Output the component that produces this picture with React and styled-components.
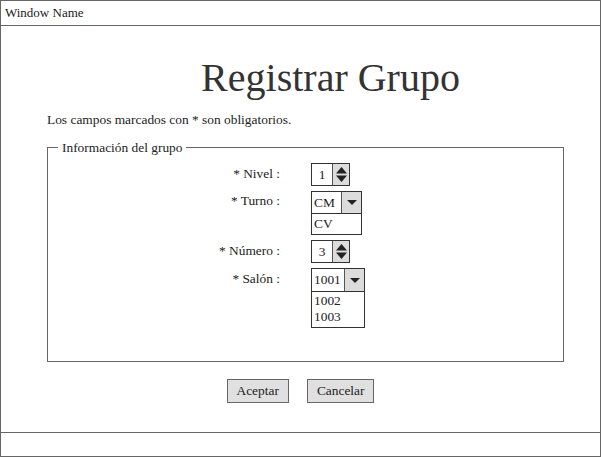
import React from 'react';
import styled, { createGlobalStyle } from 'styled-components';

const GlobalStyle = createGlobalStyle`
  html, body {
    margin: 0;
    padding: 0;
    background: #ffffff;
  }
  body {
    font-family: "Liberation Serif", "Times New Roman", serif;
    color: #333333;
  }
`;

const Window = styled.div`
  width: 601px;
  height: 457px;
  box-sizing: border-box;
  border: 1px solid #666666;
  display: flex;
  flex-direction: column;
  background: #ffffff;
`;

const TitleBar = styled.div`
  height: 24px;
  border-bottom: 1px solid #666666;
  padding-left: 4px;
  font-size: 13px;
  line-height: 24px;
  color: #222222;
`;

const Content = styled.div`
  flex: 1;
  padding-top: 30px;
  display: flex;
  flex-direction: column;
`;

const Heading = styled.h1`
  margin: 0;
  padding-left: 60px;
  font-weight: normal;
  font-size: 40px;
  line-height: 44px;
  text-align: center;
  color: #333333;
`;

const Note = styled.p`
  margin: 12px 0 0 46px;
  font-size: 13.4px;
  line-height: 15px;
  color: #222222;
`;

const FieldSet = styled.fieldset`
  margin: 13px 0 0 46px;
  width: 517px;
  box-sizing: border-box;
  border: 1px solid #666666;
  padding: 8px 0 33px 0;
`;

const Legend = styled.legend`
  margin-left: 10px;
  padding: 0 4px;
  font-size: 13.4px;
  line-height: 15px;
  color: #222222;
`;

const FormGrid = styled.div`
  display: grid;
  grid-template-columns: 232px auto;
  column-gap: 31px;
  row-gap: 5px;
  justify-content: start;
  align-items: start;
`;

const Label = styled.label`
  text-align: right;
  font-size: 13.4px;
  line-height: 15px;
  padding-top: ${p => p.$offset || 3}px;
  color: #222222;
`;

const Spinner = styled.div`
  display: flex;
  width: 39px;
  height: 23px;
  box-sizing: border-box;
  border: 1px solid #333333;
`;

const SpinValue = styled.div`
  width: 20px;
  text-align: center;
  font-size: 13.4px;
  line-height: 21px;
  color: #222222;
`;

const SpinButton = styled.div`
  flex: 1;
  background: #dcdcdc;
  border-left: 1px solid #555555;
  display: flex;
  align-items: center;
  justify-content: center;
`;

const Select = styled.div`
  width: ${p => p.$width}px;
  display: flex;
  flex-direction: column;
  box-sizing: border-box;
  border: 1px solid #333333;
`;

const SelectHead = styled.div`
  display: flex;
  height: ${p => p.$height}px;
  border-bottom: 1px solid #333333;
`;

const SelectValue = styled.div`
  flex: 1;
  padding-left: 2px;
  font-size: 13.4px;
  line-height: ${p => p.$height}px;
  color: #222222;
`;

const SelectButton = styled.div`
  width: 19px;
  background: #dcdcdc;
  border-left: 1px solid #555555;
  display: flex;
  align-items: center;
  justify-content: center;
`;

const OptionList = styled.div`
  padding: ${p => p.$padTop}px 0 ${p => p.$padBottom}px 2px;
`;

const Option = styled.div`
  font-size: 13.4px;
  line-height: 16px;
  color: #222222;
`;

const Actions = styled.div`
  display: flex;
  justify-content: center;
  gap: 18px;
  margin-top: 17px;
`;

const Button = styled.button`
  height: 24px;
  padding: 0 9px;
  background: #e0e0e0;
  border: 1px solid #666666;
  border-radius: 0;
  font-family: "Liberation Serif", "Times New Roman", serif;
  font-size: 13.4px;
  color: #222222;
`;

const StatusBar = styled.div`
  height: 23px;
  border-top: 1px solid #666666;
`;

const UpDownIcon = () => (
  <svg width="11" height="15" viewBox="0 0 11 15">
    <path d="M5.5 0 L11 6.5 L0 6.5 Z" fill="#222" />
    <path d="M0 8.5 L11 8.5 L5.5 15 Z" fill="#222" />
  </svg>
);

const CaretIcon = () => (
  <svg width="10" height="5" viewBox="0 0 10 5">
    <path d="M0 0 L10 0 L5 5 Z" fill="#222" />
  </svg>
);

const NumberField = ({ value }) => (
  <Spinner>
    <SpinValue>{value}</SpinValue>
    <SpinButton>
      <UpDownIcon />
    </SpinButton>
  </Spinner>
);

const ListSelect = ({ width, headHeight, value, options, padTop = 2, padBottom = 2 }) => (
  <Select $width={width}>
    <SelectHead $height={headHeight}>
      <SelectValue $height={headHeight}>{value}</SelectValue>
      <SelectButton>
        <CaretIcon />
      </SelectButton>
    </SelectHead>
    <OptionList $padTop={padTop} $padBottom={padBottom}>
      {options.map(o => (
        <Option key={o}>{o}</Option>
      ))}
    </OptionList>
  </Select>
);

const App = () => (
  <>
    <GlobalStyle />
    <Window>
      <TitleBar>Window Name</TitleBar>
      <Content>
        <Heading>Registrar Grupo</Heading>
        <Note>Los campos marcados con * son obligatorios.</Note>
        <FieldSet>
          <Legend>Información del grupo</Legend>
          <FormGrid>
            <Label>* Nivel :</Label>
            <NumberField value="1" />
            <Label $offset={2}>* Turno :</Label>
            <ListSelect width={51} headHeight={21} value="CM" options={['CV']} />
            <Label>* Número :</Label>
            <NumberField value="3" />
            <Label>* Salón :</Label>
            <ListSelect
              width={54}
              headHeight={22}
              value="1001"
              options={['1002', '1003']}
              padTop={1}
              padBottom={2}
            />
          </FormGrid>
        </FieldSet>
        <Actions>
          <Button>Aceptar</Button>
          <Button>Cancelar</Button>
        </Actions>
      </Content>
      <StatusBar />
    </Window>
  </>
);

export default App;
